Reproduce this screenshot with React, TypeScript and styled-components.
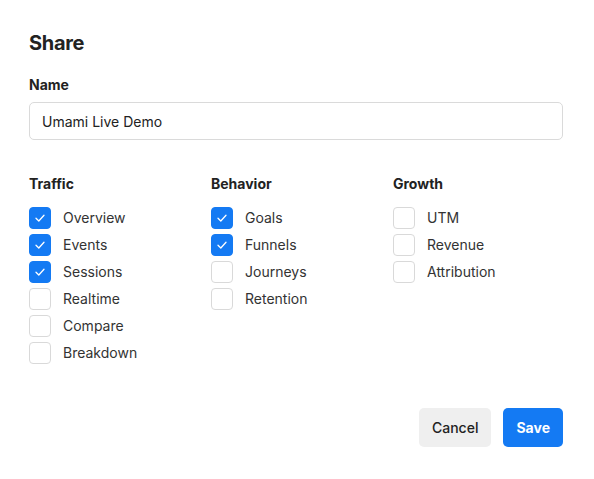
import React, { useState } from 'react'
import styled, { createGlobalStyle } from 'styled-components'

const GlobalStyle = createGlobalStyle`
  html, body {
    margin: 0;
    padding: 0;
    background: #ffffff;
    font-family: Inter, "Noto Sans", sans-serif;
    color: #222222;
  }
`

interface Section {
  title: string
  items: string[]
}

const sections: Section[] = [
  { title: 'Traffic', items: ['Overview', 'Events', 'Sessions', 'Realtime', 'Compare', 'Breakdown'] },
  { title: 'Behavior', items: ['Goals', 'Funnels', 'Journeys', 'Retention'] },
  { title: 'Growth', items: ['UTM', 'Revenue', 'Attribution'] },
]

const initialChecked: Record<string, boolean> = {
  Overview: true,
  Events: true,
  Sessions: true,
  Goals: true,
  Funnels: true,
}

export default function App() {
  const [name, setName] = useState('Umami Live Demo')
  const [checked, setChecked] = useState(initialChecked)

  const toggle = (key: string) => setChecked({ ...checked, [key]: !checked[key] })

  return (
    <>
      <GlobalStyle />
      <Dialog>
        <Title>Share</Title>
        <Field>
          <Label>Name</Label>
          <Input value={name} onChange={e => setName(e.target.value)} />
        </Field>
        <Columns>
          {sections.map(section => (
            <Column key={section.title}>
              <Label>{section.title}</Label>
              <List>
                {section.items.map(item => (
                  <Row key={item} onClick={() => toggle(item)}>
                    <Box $checked={!!checked[item]}>
                      {checked[item] &&
                        <svg width="12" height="12" viewBox="0 0 12 12" fill="none">
                          <path d="M2 6.2 L4.8 9 L10 3.2" stroke="#ffffff" strokeWidth="1.3" strokeLinecap="round" strokeLinejoin="round" />
                        </svg>}
                    </Box>
                    <RowText>{item}</RowText>
                  </Row>
                ))}
              </List>
            </Column>
          ))}
        </Columns>
        <Footer>
          <Button>Cancel</Button>
          <Button $primary>Save</Button>
        </Footer>
      </Dialog>
    </>
  )
}

const Dialog = styled.div`
  width: 534px;
  padding: 29px 31px 32px 29px;
  display: flex;
  flex-direction: column;
`

const Title = styled.h2`
  margin: 0;
  font-size: 20px;
  line-height: 28px;
  font-weight: 700;
  letter-spacing: -0.3px;
  color: #222222;
`

const Field = styled.div`
  margin-top: 18px;
  display: flex;
  flex-direction: column;
  gap: 7px;
`

const Label = styled.div`
  font-size: 14px;
  line-height: 20px;
  font-weight: 700;
  color: #222222;
`

const Input = styled.input`
  box-sizing: border-box;
  height: 38px;
  width: 100%;
  padding: 0 12px;
  border: 1px solid #dadada;
  border-radius: 5px;
  font-family: inherit;
  font-size: 14px;
  color: #222222;
  outline: none;
`

const Columns = styled.div`
  margin-top: 34px;
  display: grid;
  grid-template-columns: 182px 182px 1fr;
`

const Column = styled.div`
  display: flex;
  flex-direction: column;
  gap: 13px;
`

const List = styled.div`
  display: flex;
  flex-direction: column;
  gap: 5px;
`

const Row = styled.label`
  display: flex;
  align-items: center;
  gap: 12px;
  cursor: pointer;
`

const Box = styled.span<{ $checked: boolean }>`
  box-sizing: border-box;
  width: 22px;
  height: 22px;
  border-radius: 4px;
  display: flex;
  align-items: center;
  justify-content: center;
  background: ${p => (p.$checked ? '#147af3' : '#ffffff')};
  border: 1px solid ${p => (p.$checked ? '#147af3' : '#d9d9d9')};
`

const RowText = styled.span`
  font-size: 14px;
  line-height: 20px;
  color: #333333;
`

const Footer = styled.div`
  margin-top: 44px;
  display: flex;
  justify-content: flex-end;
  gap: 12px;
`

const Button = styled.button<{ $primary?: boolean }>`
  height: 39px;
  padding: 0 13px;
  border: none;
  border-radius: 5px;
  font-family: inherit;
  font-size: 14px;
  font-weight: ${p => (p.$primary ? 700 : 500)};
  background: ${p => (p.$primary ? '#147af3' : '#efefef')};
  color: ${p => (p.$primary ? '#ffffff' : '#222222')};
  cursor: pointer;
`
